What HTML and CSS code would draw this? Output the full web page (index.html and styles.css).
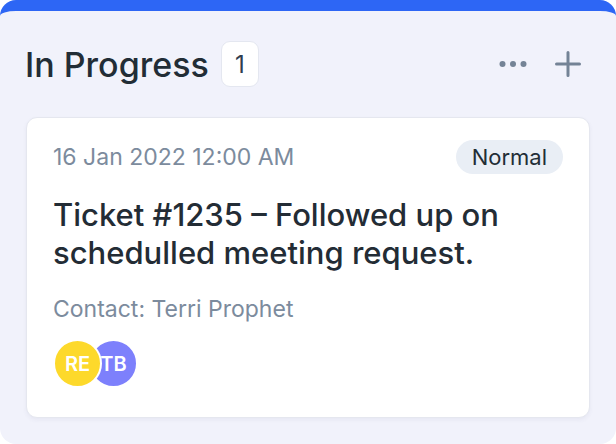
FILE: index.html
```html
<!DOCTYPE html>
<html lang="en">
<head>
    <meta charset="UTF-8">
    <meta name="viewport" content="width=device-width, initial-scale=1.0">
    <title>Board - In Progress</title>
    <link rel="stylesheet" href="styles.css">
</head>
<body>

<div class="column">
    <div class="column-header">
        <h2 class="column-title">In Progress</h2>
        <span class="column-count">1</span>
        <div class="column-actions">
            <button class="icon-button" title="More">
                <svg width="28" height="8" viewBox="0 0 28 8">
                    <circle cx="3.5" cy="4" r="3" fill="currentColor"/>
                    <circle cx="14" cy="4" r="3" fill="currentColor"/>
                    <circle cx="24.5" cy="4" r="3" fill="currentColor"/>
                </svg>
            </button>
            <button class="icon-button" title="Add ticket">
                <svg width="26" height="26" viewBox="0 0 26 26">
                    <path d="M13 1.5v23M1.5 13h23" stroke="currentColor" stroke-width="3" stroke-linecap="round"/>
                </svg>
            </button>
        </div>
    </div>

    <div class="ticket">
        <div class="ticket-top">
            <span class="ticket-date">16 Jan 2022 12:00 AM</span>
            <span class="priority">Normal</span>
        </div>
        <div class="ticket-title">Ticket #1235 – Followed up on schedulled meeting request.</div>
        <div class="ticket-contact">Contact: Terri Prophet</div>
        <div class="assignees">
            <span class="avatar avatar-yellow">RE</span>
            <span class="avatar avatar-purple">TB</span>
        </div>
    </div>
</div>

</body>
</html>
```

FILE: styles.css
```css
body {
    margin: 0;
    background-color: #ffffff;
    font-family: Inter, "Noto Sans", sans-serif;
}

.column {
    box-sizing: border-box;
    width: 616px;
    height: 444px;
    background-color: #f1f2fb;
    border-top: 11px solid #2d66f5;
    border-radius: 16px;
    padding: 0 26px;
}

.column-header {
    display: flex;
    align-items: center;
    height: 106px;
}

.column-title {
    margin: 0;
    margin-left: -1px;
    font-size: 34px;
    font-weight: 500;
    color: #222d36;
}

.column-count {
    display: flex;
    align-items: center;
    justify-content: center;
    box-sizing: border-box;
    width: 38px;
    height: 46px;
    margin-left: 12px;
    background-color: #ffffff;
    border: 1px solid #e4e7f0;
    border-radius: 9px;
    font-size: 24px;
    color: #2f3d4f;
}

.column-actions {
    margin-left: auto;
    display: flex;
    align-items: center;
    gap: 28px;
    margin-right: 9px;
}

.icon-button {
    display: flex;
    padding: 0;
    border: none;
    background: none;
    color: #748396;
    cursor: pointer;
}

.ticket {
    box-sizing: border-box;
    height: 301px;
    padding: 22px 26px 25px 26px;
    background-color: #ffffff;
    border: 1px solid #e5e7ef;
    border-radius: 11px;
    box-shadow: 0 2px 4px rgba(60, 70, 120, 0.06);
}

.ticket-top {
    display: flex;
    justify-content: space-between;
    align-items: center;
}

.ticket-date {
    font-size: 23px;
    color: #7c8b9d;
}

.priority {
    padding: 4px 16px;
    background-color: #e9eef5;
    border-radius: 18px;
    font-size: 22px;
    color: #222d36;
}

.ticket-title {
    margin-top: 22px;
    font-size: 31px;
    font-weight: 500;
    line-height: 38px;
    color: #232c35;
}

.ticket-contact {
    margin-top: 23px;
    font-size: 23px;
    color: #7c8b9d;
}

.assignees {
    display: flex;
    margin-top: 16px;
}

.avatar {
    display: flex;
    align-items: center;
    justify-content: center;
    box-sizing: border-box;
    width: 49px;
    height: 49px;
    border-radius: 50%;
    border: 2px solid #ffffff;
    font-size: 20px;
    font-weight: 600;
    color: #ffffff;
}

.avatar + .avatar {
    margin-left: -13px;
}

.avatar-yellow {
    position: relative;
    z-index: 1;
    background-color: #fdd92b;
}

.avatar-purple {
    background-color: #7d80fc;
}
```
